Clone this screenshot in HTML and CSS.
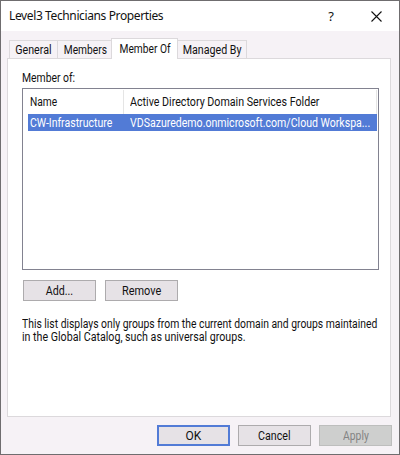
FILE: index.html
```html
<!DOCTYPE html>
<html lang="en">
<head>
<meta charset="utf-8">
<title>Level3 Technicians Properties</title>
<link rel="stylesheet" href="styles.css">
</head>
<body>
<div class="window">
  <header class="titlebar">
    <h1 class="title">Level3 Technicians Properties</h1>
    <span class="help">?</span>
    <svg class="close" width="11" height="11" viewBox="0 0 11 11"><path d="M.5.5l10 10M10.5.5l-10 10" fill="none" stroke="#111" stroke-width="1.1"/></svg>
  </header>
  <nav class="tabs">
    <div class="tab general"><span>General</span></div>
    <div class="tab members"><span>Members</span></div>
    <div class="tab active"><span>Member Of</span></div>
    <div class="tab managed"><span>Managed By</span></div>
  </nav>
  <main class="panel">
    <div class="label"><span class="t-label">Member of:</span></div>
    <div class="list">
      <div class="row head"><div class="name"><span class="t-name">Name</span></div><div class="folder"><span class="t-folder">Active Directory Domain Services Folder</span></div></div>
      <div class="row selected"><div class="name"><span class="t-cw">CW-Infrastructure</span></div><div class="folder"><span class="t-path">VDSazuredemo.onmicrosoft.com/Cloud Workspa...</span></div></div>
    </div>
    <div class="actions">
      <button class="btn"><span>Add...</span></button>
      <button class="btn"><span class="t-remove">Remove</span></button>
    </div>
    <p class="note"><span class="t-n1">This list displays only groups from the current domain and groups maintained</span><br><span class="t-n2">in the Global Catalog, such as universal groups.</span></p>
  </main>
  <footer class="footer">
    <button class="btn ok"><span>OK</span></button>
    <button class="btn"><span>Cancel</span></button>
    <button class="btn" disabled><span class="t-apply">Apply</span></button>
  </footer>
</div>
</body>
</html>
```
FILE: styles.css
```css
* { box-sizing: border-box; }
body { margin: 0; background: #6f6d6f; font: 12px/14px Roboto, "Liberation Sans", sans-serif; color: #111; }
.window { width: 399px; height: 454px; padding: 1px 0 0 1px; background: #f6f2f6; box-shadow: inset 1px 1px #6f6d6f; white-space: nowrap; }
.titlebar { display: flex; height: 30px; background: #fff; align-items: center; padding: 0 17px 0 8px; }
.title { margin: 0; flex: 1; font: 12px/16px "Noto Sans", sans-serif; letter-spacing: -.38px; }
.help { font: 13px/16px "Noto Sans", sans-serif; margin-right: 37px; }
.close { display: block; }
.tabs { display: flex; height: 27px; padding-left: 8px; align-items: flex-end; }
.tab { height: 18px; border: 1px solid #dcd9dc; border-width: 1px 0 0 1px; text-align: center; line-height: 18px; }
.general { width: 48px; }
.members { width: 55px; }
.active { width: 67px; height: 21px; margin: 0 0 -1px -1px; background: #fff; border-right-width: 1px; position: relative; line-height: 20px; }
.managed { width: 69px; border-left: 0; border-right-width: 1px; }
.panel { width: 384px; height: 359px; margin-left: 6px; padding: 12px 10px 0 14px; background: #fff; border: 1px solid #dcd9dc; }
.label { height: 17px; }
.list { width: 357px; height: 182px; border: 1px solid #828290; padding: 1px 1px 0 5px; }
.row { display: flex; }
.head { height: 24px; line-height: 24px; }
.head .name, .head .folder { border-right: 1px solid #e5e5e5; }
.name { width: 96px; padding-left: 2px; }
.folder { flex: 1; min-width: 0; padding-left: 6px; }
.selected { height: 17px; line-height: 18px; background: #527bd6; color: #fff; }
.actions { display: flex; gap: 9px; padding: 10px 0 0 1px; }
.btn { width: 73px; height: 21px; padding: 0; border: 1px solid #adabad; background: #e6e2e6; color: #111; font: inherit; }
.note { margin: 17px 0 0; line-height: 13px; }
.footer { display: flex; gap: 8px; padding: 8px 0 0 156px; }
.ok { border: 2px solid #527bd6; }
.btn:disabled { background: #cecfce; border-color: #bdbebd; color: #838383; }

/* Condensed dialog lettering */
.tab span, .btn span { display: inline-block; transform: scaleX(.89); }
.row span, .label span, .note span { display: inline-block; transform-origin: left; }
.members span, .active span { transform: scaleX(.85); }
.t-label { transform: scaleX(.865); }
.t-name { transform: scaleX(.85); }
.t-folder { transform: scaleX(.89); }
.t-cw { transform: scaleX(.877); }
.t-path { width: 240px; transform: scaleX(.88); }
.btn .t-remove { transform: scaleX(.91); }
.btn .t-apply { transform: scaleX(.86); }
.t-n1 { width: 355px; transform: scaleX(.863); }
.t-n2 { transform: scaleX(.888); }
.btn.ok span { transform: none; }
```
